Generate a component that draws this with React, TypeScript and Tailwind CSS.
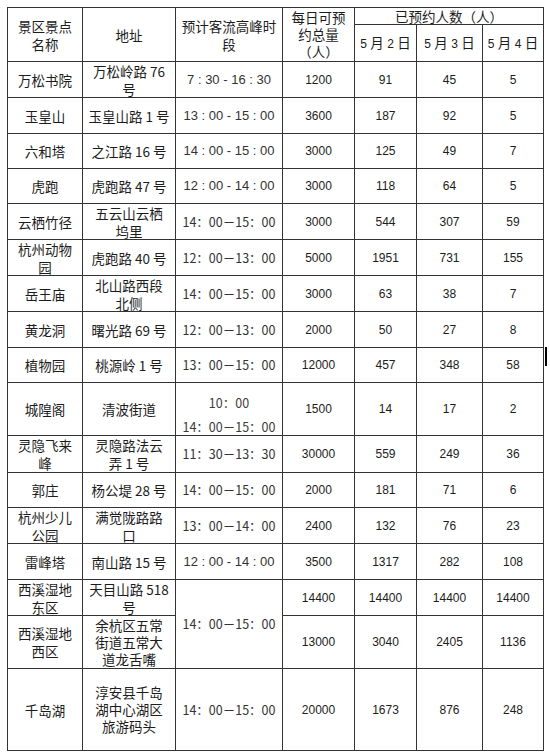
import React from "react";

type Row = {
  name: string[];
  addr: string[];
  time?: string[];
  timeKind?: "a" | "b";
  span?: boolean;
  total: string;
  d: string[];
};

const rows: Row[] = [
  { name: ["万松书院"], addr: ["万松岭路 76", "号"], time: ["7 : 30 - 16 : 30"], timeKind: "a", total: "1200", d: ["91", "45", "5"] },
  { name: ["玉皇山"], addr: ["玉皇山路 1 号"], time: ["13 : 00 - 15 : 00"], timeKind: "a", total: "3600", d: ["187", "92", "5"] },
  { name: ["六和塔"], addr: ["之江路 16 号"], time: ["14 : 00 - 15 : 00"], timeKind: "a", total: "3000", d: ["125", "49", "7"] },
  { name: ["虎跑"], addr: ["虎跑路 47 号"], time: ["12 : 00 - 14 : 00"], timeKind: "a", total: "3000", d: ["118", "64", "5"] },
  { name: ["云栖竹径"], addr: ["五云山云栖", "坞里"], time: ["14：00－15：00"], timeKind: "b", total: "3000", d: ["544", "307", "59"] },
  { name: ["杭州动物", "园"], addr: ["虎跑路 40 号"], time: ["12：00－13：00"], timeKind: "b", total: "5000", d: ["1951", "731", "155"] },
  { name: ["岳王庙"], addr: ["北山路西段", "北侧"], time: ["14：00－15：00"], timeKind: "b", total: "3000", d: ["63", "38", "7"] },
  { name: ["黄龙洞"], addr: ["曙光路 69 号"], time: ["12：00－13：00"], timeKind: "b", total: "2000", d: ["50", "27", "8"] },
  { name: ["植物园"], addr: ["桃源岭 1 号"], time: ["13：00－15：00"], timeKind: "b", total: "12000", d: ["457", "348", "58"] },
  { name: ["城隍阁"], addr: ["清波街道"], time: ["10：00", "14：00－15：00"], timeKind: "b", total: "1500", d: ["14", "17", "2"] },
  { name: ["灵隐飞来", "峰"], addr: ["灵隐路法云", "弄 1 号"], time: ["11：30－13：30"], timeKind: "b", total: "30000", d: ["559", "249", "36"] },
  { name: ["郭庄"], addr: ["杨公堤 28 号"], time: ["14：00－15：00"], timeKind: "b", total: "2000", d: ["181", "71", "6"] },
  { name: ["杭州少儿", "公园"], addr: ["满觉陇路路", "口"], time: ["13：00－14：00"], timeKind: "b", total: "2400", d: ["132", "76", "23"] },
  { name: ["雷峰塔"], addr: ["南山路 15 号"], time: ["12 : 00 - 14 : 00"], timeKind: "a", total: "3500", d: ["1317", "282", "108"] },
  { name: ["西溪湿地", "东区"], addr: ["天目山路 518", "号"], time: ["14：00－15：00"], timeKind: "b", span: true, total: "14400", d: ["14400", "14400", "14400"] },
  { name: ["西溪湿地", "西区"], addr: ["余杭区五常", "街道五常大", "道龙舌嘴"], total: "13000", d: ["3040", "2405", "1136"] },
  { name: ["千岛湖"], addr: ["淳安县千岛", "湖中心湖区", "旅游码头"], time: ["14：00－15：00"], timeKind: "b", total: "20000", d: ["1673", "876", "248"] },
];

const cjk = "font-['Noto_Sans_CJK_SC','Noto_Sans',sans-serif]";
const num = "font-['Liberation_Sans',Arial,sans-serif]";
const cell = "bg-white flex flex-col items-center justify-center text-center text-[#1c1c1c] whitespace-nowrap";

function Lines({ lines, lh }: { lines: string[]; lh: string }) {
  return (
    <>
      {lines.map((l, i) => (
        <div key={i} className={lh}>
          {l}
        </div>
      ))}
    </>
  );
}

export default function App() {
  return (
    <div className="relative w-[550px] h-[754px] overflow-hidden bg-white pl-[7px] pt-[7px]">
      <div className="grid w-fit gap-px p-px bg-[#333] grid-cols-[74px_92px_106px_71px_61px_65px_60px] grid-rows-[16px_36px_35px_35px_34px_34px_35px_35px_35px_35px_34px_52px_36px_34px_35px_35px_35px_52px_81px]">
        {/* header */}
        <div className={`${cell} ${cjk} row-span-2 text-[13.5px]`}>
          <Lines lines={["景区景点", "名称"]} lh="leading-[18px]" />
        </div>
        <div className={`${cell} ${cjk} row-span-2 text-[13.5px] leading-[18px]`}>地址</div>
        <div className={`${cell} ${cjk} row-span-2 text-[13.5px]`}>
          <Lines lines={["预计客流高峰时", "段"]} lh="leading-[18px]" />
        </div>
        <div className={`${cell} ${cjk} row-span-2 text-[13.5px]`}>
          <Lines lines={["每日可预", "约总量", "（人）"]} lh="leading-[17px]" />
        </div>
        <div className={`${cell} ${cjk} col-span-3 text-[13.5px] leading-[16px]`}>已预约人数（人）</div>
        {["2", "3", "4"].map((d) => (
          <div key={d} className={`${cell} ${cjk} text-[13.5px] leading-[18px]`}>
            <div>
              <span className={`${num} text-[12px]`}>5 </span>月<span className={`${num} text-[12px]`}> {d} </span>日
            </div>
          </div>
        ))}

        {/* body */}
        {rows.map((r, i) => (
          <React.Fragment key={i}>
            <div className={`${cell} ${cjk} text-[13.5px]`}>
              <Lines lines={r.name} lh="leading-[18px]" />
            </div>
            <div className={`${cell} ${cjk} text-[13.5px]`}>
              <Lines lines={r.addr} lh={r.addr.length > 2 ? "leading-[17px]" : "leading-[18px]"} />
            </div>
            {r.time &&
              (r.time.length > 1 ? (
                <div className={`${cell} ${cjk} !justify-start pt-[8px] text-[12.5px] text-[#3a3a3a]`}>
                  <Lines lines={r.time} lh="leading-[24px]" />
                </div>
              ) : (
                <div
                  className={`${cell} ${r.span ? "row-span-2" : ""} leading-[18px] text-[#333] ${
                    r.timeKind === "a" ? `${num} text-[13px]` : `${cjk} text-[12.5px]`
                  }`}
                >
                  {r.time[0]}
                </div>
              ))}
            <div className={`${cell} ${num} text-[12px] leading-[16px]`}>{r.total}</div>
            {r.d.map((v, j) => (
              <div key={j} className={`${cell} ${num} text-[12px] leading-[16px]`}>
                {v}
              </div>
            ))}
          </React.Fragment>
        ))}
      </div>
      <div className="absolute left-[545px] top-[347px] w-[2px] h-[19px] bg-black" />
    </div>
  );
}
